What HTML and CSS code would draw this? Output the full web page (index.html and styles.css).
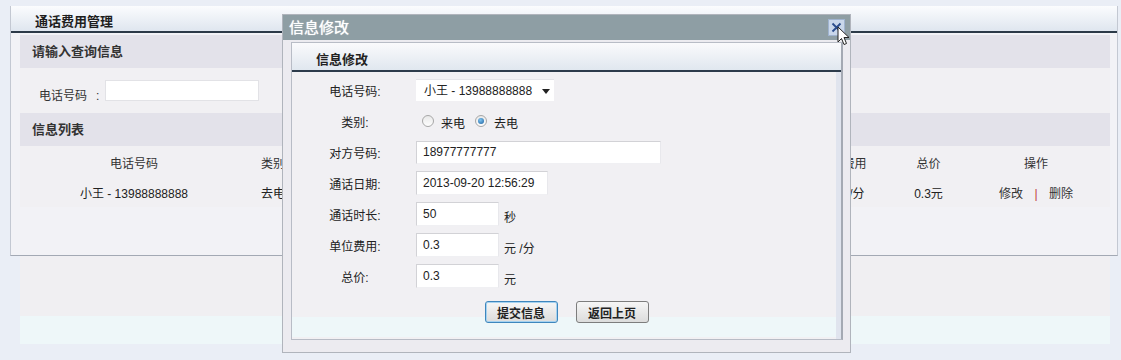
FILE: index.html
```html
<!DOCTYPE html>
<html lang="zh-CN">
<head>
  <meta charset="UTF-8" />
  <title>通话费用管理</title>
  <link rel="stylesheet" href="styles.css">
</head>
<body>

<div class="panel">
  <div class="panel-title">通话费用管理</div>
  <div class="panel-body">
    <div class="section-head">请输入查询信息</div>
    <div class="search-row">
      <label>电话号码<span class="colon">:</span></label>
      <input type="text" class="search-input" />
    </div>
    <div class="section-head">信息列表</div>
    <table class="list">
      <colgroup>
        <col style="width:228px">
        <col style="width:50px">
        <col style="width:222px">
        <col style="width:180px">
        <col style="width:90px">
        <col style="width:105px">
        <col style="width:67px">
        <col style="width:148px">
      </colgroup>
      <tr class="head-row">
        <td>电话号码</td>
        <td>类别</td>
        <td></td>
        <td></td>
        <td></td>
        <td>单位费用</td>
        <td>总价</td>
        <td>操作</td>
      </tr>
      <tr>
        <td>小王 - 13988888888</td>
        <td>去电</td>
        <td></td>
        <td></td>
        <td></td>
        <td>0.3元/分</td>
        <td>0.3元</td>
        <td><a href="#">修改</a> <span class="sep">|</span> <a href="#">删除</a></td>
      </tr>
    </table>
  </div>
</div>
<div class="panel-foot">
  <div class="foot-a"></div>
  <div class="foot-b"></div>
</div>

<div class="dialog">
  <div class="dlg-title">信息修改</div>
  <a href="#" class="dlg-close">
    <svg width="11" height="11" viewBox="0 0 11 11"><path d="M1.5 1.5 L9.5 9.5 M9.5 1.5 L1.5 9.5" stroke="#2a4c8c" stroke-width="1.8" fill="none"/></svg>
  </a>
  <div class="dlg-inner">
    <div class="dlg-band"></div>
    <div class="dlg-inner-head">信息修改</div>
    <div class="form">
      <div class="row">
        <span class="lbl">电话号码:</span>
        <div class="select">小王 - 13988888888 <span class="arrow"></span></div>
      </div>
      <div class="row row-radio">
        <span class="lbl">类别:</span>
        <span class="radio"></span><span class="radio-text">来电</span>
        <span class="radio checked"></span><span class="radio-text">去电</span>
      </div>
      <div class="row">
        <span class="lbl">对方号码:</span>
        <input type="text" class="field field-long" value="18977777777" />
      </div>
      <div class="row">
        <span class="lbl">通话日期:</span>
        <input type="text" class="field field-date" value="2013-09-20 12:56:29" />
      </div>
      <div class="row">
        <span class="lbl">通话时长:</span>
        <input type="text" class="field" value="50" />
        <span class="unit">秒</span>
      </div>
      <div class="row">
        <span class="lbl">单位费用:</span>
        <input type="text" class="field" value="0.3" />
        <span class="unit">元 /分</span>
      </div>
      <div class="row">
        <span class="lbl">总价:</span>
        <input type="text" class="field" value="0.3" />
        <span class="unit">元</span>
      </div>
      <div class="buttons">
        <button class="btn btn-focus">提交信息</button>
        <button class="btn">返回上页</button>
      </div>
    </div>
  </div>
</div>

<svg class="cursor" width="14" height="21" viewBox="0 0 14 21">
  <path d="M1 1 L1 16 L4.5 12.5 L7 18.5 L9.5 17.5 L7 11.5 L12 11.5 Z" fill="#fff" stroke="#222" stroke-width="1" stroke-linejoin="round"/>
</svg>

</body>
</html>
```

FILE: styles.css
```css
body {
  margin: 0;
  background: #eaeef6;
  font-family: "Liberation Sans", "Noto Sans CJK SC", sans-serif;
  font-size: 12px;
  color: #222;
  position: relative;
  height: 360px;
  overflow: hidden;
}
.panel {
  margin: 6px 0 0 10px;
  width: 1106px;
  border-left: 1px solid #c3c8d2;
  border-right: 1px solid #c3c8d2;
  border-bottom: 1px solid #a3a9b4;
  background: #f2f2f6;
}
.panel-title {
  height: 19px;
  padding: 6px 0 0 24px;
  line-height: 19px;
  background: linear-gradient(#fbfcfe, #dfe6ef);
  border-bottom: 2px solid #2c3a48;
  font-weight: bold;
  font-size: 13px;
  color: #1e1e1e;
}
.panel-body {
  padding: 2px 7px 0 9px;
  height: 220px;
}
.section-head {
  height: 33px;
  line-height: 33px;
  padding-left: 12px;
  background: #e3e2ea;
  font-weight: bold;
  font-size: 13px;
  color: #333;
}
.search-row {
  height: 45px;
  padding-left: 19px;
  display: flex;
  align-items: center;
  background: #f1f0f3;
  color: #333;
}
.search-row label {
  padding-top: 8px;
}
.colon {
  margin-left: 9px;
}
.search-input {
  margin-left: 6px;
  width: 152px;
  height: 19px;
  border: 1px solid #e2e2e6;
  background: #fff;
  padding: 0;
}
.list {
  width: 1090px;
  table-layout: fixed;
  border-collapse: collapse;
  background: #f1f0f3;
}
.list td {
  text-align: center;
  height: 30px;
  padding: 0;
  white-space: nowrap;
  overflow: hidden;
  color: #222;
}
.list .head-row td {
  height: 29px;
  padding-top: 2px;
  color: #333;
}
.list a {
  color: #333;
  text-decoration: none;
}
.sep {
  color: #c04040;
  margin: 0 8px;
}
.panel-foot {
  margin-left: 20px;
  width: 1090px;
}
.foot-a {
  height: 60px;
  background: #f0eff2;
}
.foot-b {
  height: 28px;
  background: #eef7f9;
}

.dialog {
  position: absolute;
  left: 282px;
  top: 14px;
  width: 567px;
  height: 337px;
  border: 1px solid #b0b4bc;
  background: #ecebf0;
}
.dlg-title {
  height: 25px;
  line-height: 25px;
  padding-left: 6px;
  background: #8e9ea4;
  color: #fff;
  font-size: 15px;
  text-shadow: 0 0 1px #fff;
}
.dlg-close {
  position: absolute;
  left: 545px;
  top: 4px;
  width: 15px;
  height: 15px;
  border: 1px solid #9fb3cf;
  background: #c9d7eb;
  display: flex;
  align-items: center;
  justify-content: center;
}
.dlg-inner {
  margin: 2px 7px 0 8px;
  height: 296px;
  border: 1px solid #b8bcc6;
  border-right: 2px solid #a4a9b3;
  background: #f1f0f3;
  box-shadow: inset -5px 0 0 #e0e4ee;
  position: relative;
}
.dlg-inner-head {
  height: 27px;
  line-height: 33px;
  padding-left: 24px;
  background: linear-gradient(#fafafc, #e0e7ef);
  border-bottom: 2px solid #2d3b4b;
  font-weight: bold;
  font-size: 13px;
  color: #222;
  position: relative;
}
.form {
  padding: 6px 0 0 23px;
  position: relative;
}
.row {
  display: flex;
  align-items: center;
  height: 24px;
  margin-bottom: 7px;
}
.row-radio {
  margin-top: 7px;
  margin-bottom: 7px;
}
.lbl {
  width: 80px;
  margin-right: 21px;
  text-align: center;
  color: #222;
}
.select {
  width: 138px;
  height: 22px;
  line-height: 22px;
  padding-left: 8px;
  background: #fff;
  border-top: 1px solid #e4e4e8;
  color: #222;
  position: relative;
  box-sizing: border-box;
}
.arrow {
  position: absolute;
  right: 4px;
  top: 9px;
  border-left: 4px solid transparent;
  border-right: 4px solid transparent;
  border-top: 5px solid #222;
}
.radio {
  width: 10px;
  height: 10px;
  border: 1px solid #a7a7a7;
  border-radius: 50%;
  background: linear-gradient(#e9e9e9, #fdfdfd);
  margin-left: 6px;
  position: relative;
}
.radio.checked {
  margin-left: 10px;
}
.radio.checked::after {
  content: "";
  position: absolute;
  left: 2px;
  top: 2px;
  width: 6px;
  height: 6px;
  border-radius: 50%;
  background: radial-gradient(circle at 40% 35%, #7fc4f0, #1c5f9e);
}
.radio-text {
  margin-left: 7px;
  padding-top: 3px;
}
.field {
  width: 83px;
  height: 24px;
  box-sizing: border-box;
  border: 1px solid #d2d2d6;
  border-right-color: #e8e8ec;
  border-bottom-color: #f0f0f3;
  background: #fff;
  padding: 0 0 0 6px;
  font-family: "Liberation Sans", "Noto Sans CJK SC", sans-serif;
  font-size: 12px;
  color: #222;
}
.field-long {
  width: 245px;
  height: 23px;
}
.field-date {
  width: 132px;
}
.unit {
  margin-left: 5px;
  padding-top: 5px;
  color: #222;
}
.buttons {
  display: flex;
  justify-content: center;
  gap: 18px;
  margin: 13px 0 0 -23px;
}
.btn {
  width: 73px;
  height: 22px;
  padding: 0;
  border: 1px solid #7d7d7d;
  border-radius: 3px;
  background: linear-gradient(#f6f6f6, #dcdcdc);
  font-family: "Noto Sans CJK SC", sans-serif;
  font-size: 12px;
  font-weight: bold;
  color: #222;
}
.btn-focus {
  border-color: #3e86bd;
  box-shadow: inset 0 0 0 1px #a6d2f0;
}
.dlg-band {
  position: absolute;
  left: 0;
  right: 5px;
  bottom: 2px;
  height: 20px;
  background: #eef7f9;
}
.cursor {
  position: absolute;
  left: 837px;
  top: 26px;
}
```
